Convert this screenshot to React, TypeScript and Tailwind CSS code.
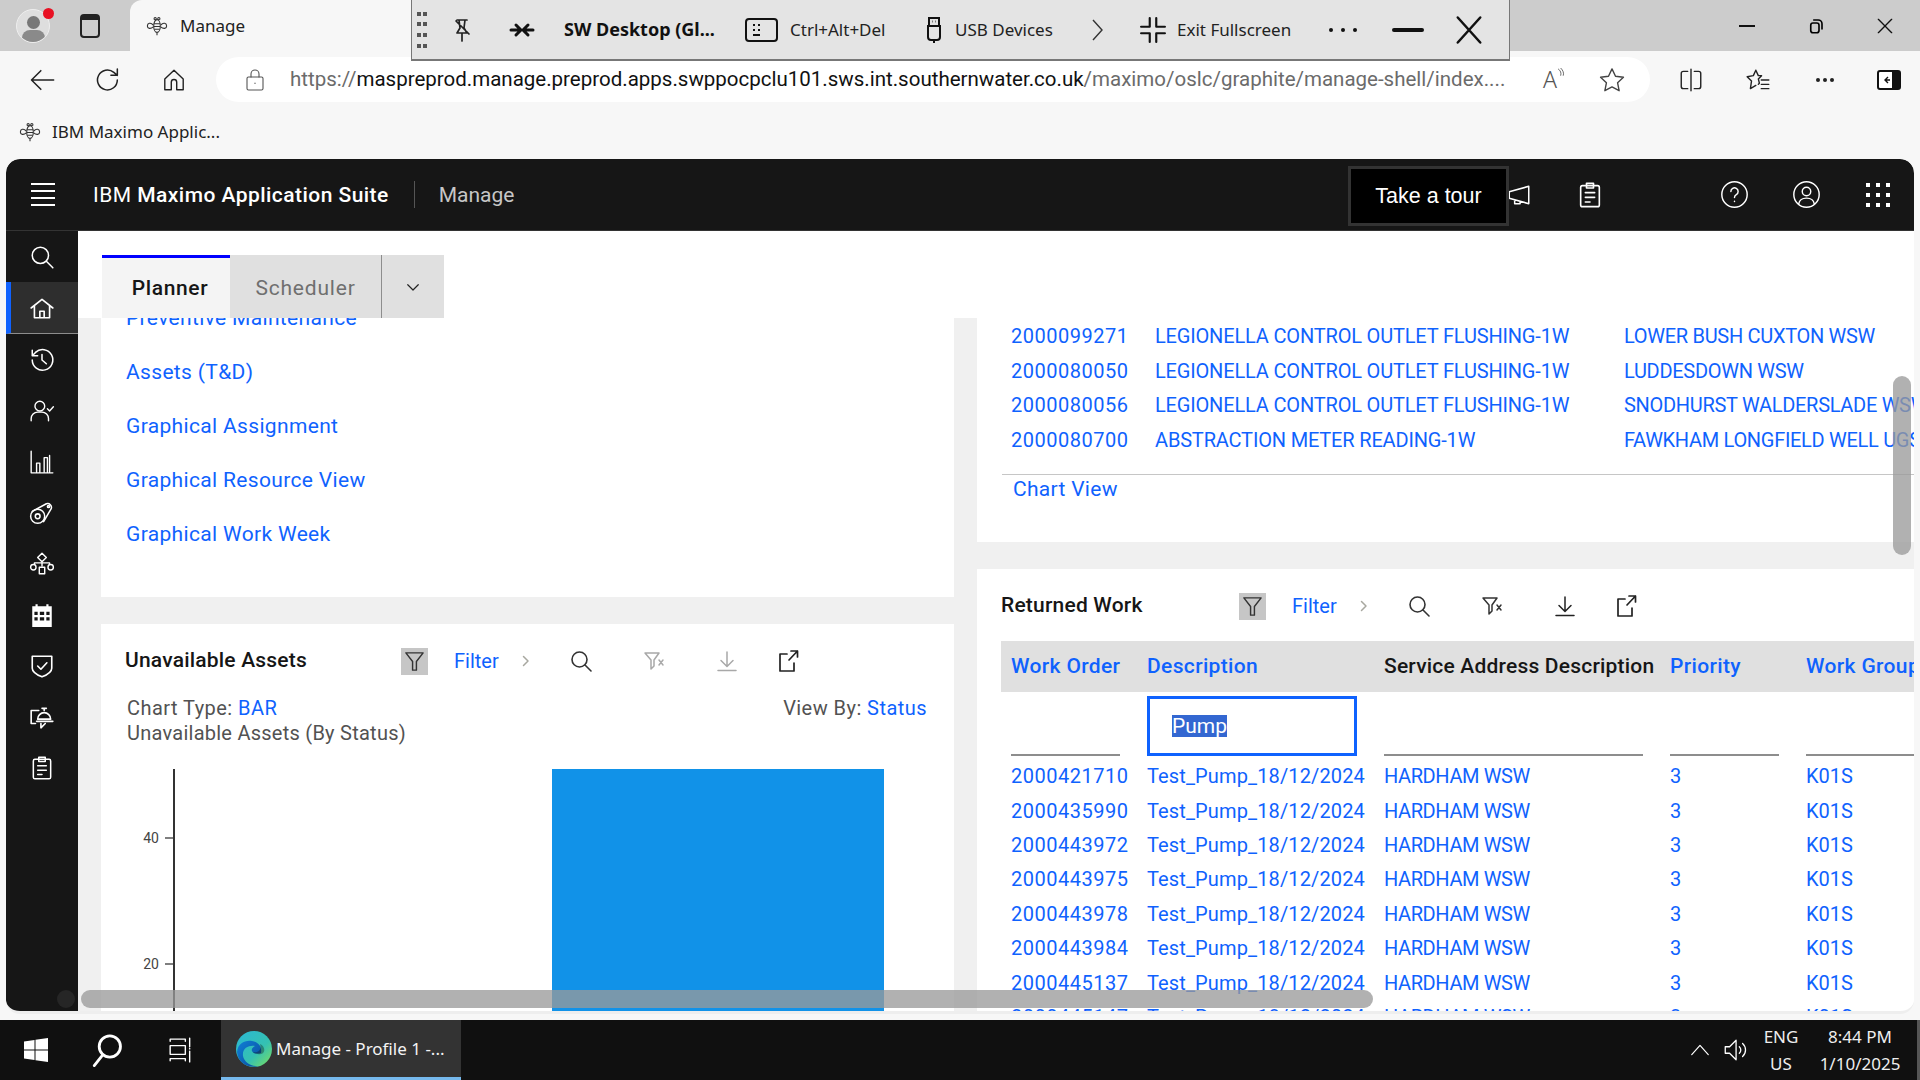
import type { ReactNode } from "react";

const plex = "font-['Roboto','Liberation_Sans',sans-serif]";
const ui = "font-['Noto_Sans','Liberation_Sans',sans-serif]";

function Ic({ className, sw = 1.5, children }: { className?: string; sw?: number; children: ReactNode }) {
  return (
    <svg viewBox="0 0 24 24" fill="none" stroke="currentColor" strokeWidth={sw} strokeLinecap="round" strokeLinejoin="round" className={className}>
      {children}
    </svg>
  );
}

function Bee({ className }: { className?: string }) {
  return (
    <svg viewBox="0 0 24 24" fill="none" stroke="currentColor" strokeWidth="1.2" className={className}>
      <circle cx="10" cy="4" r="1.2" />
      <circle cx="14" cy="4" r="1.2" />
      <ellipse cx="12" cy="12" rx="3.6" ry="7" />
      <path d="M8.5 9.5h7M8.5 12.5h7M9 15.5h6M12 19v3" />
      <path d="M8 11C5 7.5 1.5 9 1.5 12s3.5 3.5 6.5 1M16 11c3-3.5 6.5-2 6.5 1s-3.5 3.5-6.5 1" />
    </svg>
  );
}

function Funnel({ className, x = false }: { className?: string; x?: boolean }) {
  return (
    <Ic className={className} sw={1.5}>
      <path d={x ? "M3 4h14l-5 7v6l-3 3v-9z" : "M3 3h18l-7 9v9h-4v-9z"} />
      {x && <path d="M17 11l4 5M21 11l-4 5" />}
    </Ic>
  );
}

function CardToolbar({ title, titleClass, clearClass, downloadClass }: { title: string; titleClass: string; clearClass: string; downloadClass: string }) {
  return (
    <div className="flex items-center shrink-0">
      <div className={`pl-[24px] text-[21px] font-medium text-[#161616] tracking-[0.2px] whitespace-nowrap ${titleClass}`}>{title}</div>
      <div className="w-[27px] h-[27px] bg-[#c6c6c6] flex items-center justify-center text-[#333]">
        <Funnel className="w-[23px] h-[23px]" />
      </div>
      <a className="ml-[26px] w-[46px] text-[20px] text-[#0f62fe] whitespace-nowrap">Filter</a>
      <div className="ml-[20px] w-[12px] text-[#a8a8a0]">
        <Ic className="w-[12px] h-[16px]" sw={3}><path d="M7 3l9 9-9 9" /></Ic>
      </div>
      <Ic className="ml-[37px] w-[24px] h-[24px] text-[#333]" sw={1.6}><circle cx="10.5" cy="10.5" r="7.5" /><path d="M16 16l6 6" /></Ic>
      <Funnel x className={`ml-[49px] w-[24px] h-[24px] ${clearClass}`} />
      <Ic className={`ml-[49px] w-[24px] h-[24px] ${downloadClass}`}><path d="M12 3v14M6 11.5l6 6 6-6M3 21.5h18" /></Ic>
      <Ic className="ml-[37px] w-[24px] h-[24px] text-[#222]" sw={1.7}><path d="M11 5H4v17h14v-8M13 11l8.5-9M15 2h6.5v6" /></Ic>
    </div>
  );
}

const topRows = [
  ["2000099271", "LEGIONELLA CONTROL OUTLET FLUSHING-1W", "LOWER BUSH CUXTON WSW"],
  ["2000080050", "LEGIONELLA CONTROL OUTLET FLUSHING-1W", "LUDDESDOWN WSW"],
  ["2000080056", "LEGIONELLA CONTROL OUTLET FLUSHING-1W", "SNODHURST WALDERSLADE WSW"],
  ["2000080700", "ABSTRACTION METER READING-1W", "FAWKHAM LONGFIELD WELL UGS"],
];

const returned = ["2000421710", "2000435990", "2000443972", "2000443975", "2000443978", "2000443984", "2000445137", "2000445147"];

const links = ["Preventive Maintenance", "Assets (T&D)", "Graphical Assignment", "Graphical Resource View", "Graphical Work Week"];

function TitleBar() {
  return (
    <div className={`h-[51px] shrink-0 bg-[#cccccc] flex items-center ${ui}`}>
      <div className="ml-[16px] w-[34px] h-[34px] rounded-full bg-[#dedede] border border-[#eee] relative overflow-hidden">
        <div className="absolute left-[10px] top-[6px] w-[13px] h-[13px] rounded-full bg-[#777]" />
        <div className="absolute left-[5px] top-[20px] w-[23px] h-[16px] rounded-full bg-[#8a8a8a]" />
      </div>
      <div className="ml-[-7px] mt-[-24px] w-[11px] h-[11px] rounded-full bg-[#e81123] z-10" />
      <div className="ml-[26px] w-[20px] h-[24px] rounded-[4px] border-2 border-t-[6px] border-[#222]" />
      <div className="ml-[30px] w-[290px] h-[51px] bg-[#f7f7f7] rounded-tl-[12px] flex items-center pl-[16px]">
        <Bee className="w-[22px] h-[22px] text-[#333]" />
        <span className="ml-[12px] text-[17px] text-[#222]">Manage</span>
      </div>
      <div className="ml-auto flex items-center">
        <div className="w-[69px] flex justify-center"><div className="w-[16px] h-[2px] bg-[#111]" /></div>
        <div className="w-[69px] flex justify-center">
          <Ic className="w-[18px] h-[18px] text-[#000]" sw={2.2}><rect x="5" y="8" width="11" height="13" rx="3" /><path d="M9 4h6a5 5 0 0 1 5 5v7" /></Ic>
        </div>
        <div className="w-[69px] mr-[1px] flex justify-center">
          <Ic className="w-[20px] h-[20px] text-[#111]" sw={1.6}><path d="M4 4l16 16M20 4L4 20" /></Ic>
        </div>
      </div>
    </div>
  );
}

function RemoteBar() {
  return (
    <div className={`absolute left-[411px] top-0 w-[1099px] h-[61px] bg-[#e4e4e4] border-x border-b-2 border-[#777] flex items-center text-[#222] whitespace-nowrap ${ui}`}>
      <svg viewBox="0 0 10 36" className="ml-[5px] w-[10px] h-[36px] text-[#555]" fill="currentColor">
        <rect x="0" y="0" width="4" height="4" /><rect x="6" y="0" width="4" height="4" />
        <rect x="0" y="10" width="4" height="4" /><rect x="6" y="10" width="4" height="4" />
        <rect x="0" y="21" width="4" height="4" /><rect x="6" y="21" width="4" height="4" />
        <rect x="0" y="32" width="4" height="4" /><rect x="6" y="32" width="4" height="4" />
      </svg>
      <Ic className="ml-[23px] w-[24px] h-[26px] text-[#222]" sw={1.7}><path d="M7 2h10M9 2l1 8-3 5h10l-3-5 1-8M12 15v8M6 3l13 13" /></Ic>
      <Ic className="ml-[31px] w-[34px] h-[24px] text-[#111]" sw={3}><path d="M1 12h8M6 7l5 5-5 5M23 12h-8M18 7l-5 5 5 5" /></Ic>
      <span className="ml-[25px] w-[150px] text-[18px] font-bold text-[#111]">SW Desktop (Gl...</span>
      <svg viewBox="0 0 33 24" className="ml-[31px] w-[33px] h-[24px] text-[#111]" fill="none" stroke="currentColor" strokeWidth="2">
        <rect x="1" y="1" width="31" height="22" rx="3" />
        <path d="M8 7h2M13 7h2M8 12h2M13 12h2M8 17h7" />
      </svg>
      <span className="ml-[12px] w-[100px] text-[17px]">Ctrl+Alt+Del</span>
      <svg viewBox="0 0 16 26" className="ml-[36px] w-[16px] h-[26px] text-[#111]" fill="none" stroke="currentColor" strokeWidth="2">
        <path d="M3 1h10v8H3zM2 9h12v11a3 3 0 0 1-3 3H5a3 3 0 0 1-3-3zM8 23v3M6 4.500h.5M9.500 4.500h.5" />
      </svg>
      <span className="ml-[13px] w-[97px] text-[17px]">USB Devices</span>
      <svg viewBox="0 0 12 24" className="ml-[39px] w-[12px] h-[24px] text-[#333]" fill="none" stroke="currentColor" strokeWidth="1.4">
        <path d="M2 2l9 10-9 10" />
      </svg>
      <Ic className="ml-[37px] w-[26px] h-[26px] text-[#111]" sw={2}><path d="M9 1v8H1M15 1v8h8M9 23v-8H1M15 23v-8h8" /></Ic>
      <span className="ml-[11px] w-[113px] text-[17px]">Exit Fullscreen</span>
      <div className="ml-[38px] w-[30px] flex justify-between px-[1px]">
        <div className="w-[4px] h-[4px] rounded-full bg-[#111]" />
        <div className="w-[4px] h-[4px] rounded-full bg-[#111]" />
        <div className="w-[4px] h-[4px] rounded-full bg-[#111]" />
      </div>
      <div className="ml-[34px] w-[32px] h-[4px] rounded-full bg-[#111]" />
      <Ic className="ml-[30px] w-[30px] h-[30px] text-[#111]" sw={2}><path d="M3 2l18 20M21 2L3 22" /></Ic>
    </div>
  );
}

function AddressRow() {
  return (
    <div className={`h-[61px] shrink-0 bg-[#f7f7f7] flex items-start pt-[6px] ${ui}`}>
      <div className="ml-[9px] w-[66px] h-[45px] flex items-center justify-center">
        <Ic className="w-[28px] h-[28px] text-[#222]" sw={1.3}><path d="M22 12H3M11 4l-8 8 8 8" /></Ic>
      </div>
      <div className="w-[66px] h-[45px] flex items-center justify-center">
        <Ic className="w-[28px] h-[28px] text-[#222]" sw={1.3}><path d="M20 12a8.5 8.5 0 1 1-3-6.5L20 8M20 2.5V8h-5.5" /></Ic>
      </div>
      <div className="w-[66px] h-[45px] flex items-center justify-center">
        <Ic className="w-[26px] h-[26px] text-[#222]" sw={1.3}><path d="M3.5 11 12 3l8.5 8v10h-6v-7a2.5 2.5 0 0 0-5 0v7h-6z" /></Ic>
      </div>
      <div className="ml-[9px] w-[1434px] h-[45px] shrink-0 rounded-full bg-white flex items-center">
        <Ic className="ml-[27px] w-[24px] h-[26px] text-[#555]" sw={1.1}><rect x="4" y="9" width="16" height="13" rx="1.5" /><path d="M8 9V6a4 4 0 0 1 8 0v3M12 15v.5" /></Ic>
        <div className="ml-[23px] w-[1220px] text-[20.5px] whitespace-nowrap overflow-hidden text-[#6b6b6b] font-['Roboto',sans-serif]">
          https://<span className="text-[#111]">maspreprod.manage.preprod.apps.swppocpclu101.sws.int.southernwater.co.uk</span>/maximo/oslc/graphite/manage-shell/index....
        </div>
        <div className="ml-[33px] w-[26px] flex items-start text-[#555]">
          <span className="text-[23px] leading-none font-light">A</span>
          <svg viewBox="0 0 10 14" className="w-[9px] h-[12px]" fill="none" stroke="currentColor" strokeWidth="1">
            <path d="M1 1c3 2 4 5 3 8M4 0c3 3 4 6 3 9" />
          </svg>
        </div>
        <Ic className="ml-[29px] w-[28px] h-[28px] text-[#444]" sw={1.2}><path d="M12 2.5l3 6.3 6.8.9-5 4.7 1.3 6.8-6.1-3.3-6.1 3.3 1.3-6.8-5-4.7 6.8-.9z" /></Ic>
      </div>
      <div className="ml-[7px] flex">
        <div className="w-[67px] h-[45px] flex items-center justify-center">
          <Ic className="w-[26px] h-[26px] text-[#222]" sw={1.3}><path d="M9 4H5a2 2 0 0 0-2 2v12a2 2 0 0 0 2 2h4M15 4h4a2 2 0 0 1 2 2v12a2 2 0 0 1-2 2h-4M12 2v20" /></Ic>
        </div>
        <div className="w-[67px] h-[45px] flex items-center justify-center">
          <Ic className="w-[26px] h-[26px] text-[#222]" sw={1.3}><path d="M10 3l2.3 5h3l-3 3 1 4-1 1M10 3 7.7 8 2 9l4 4-1 7 5-3M15 12h7M15 16h7M15 20h7" /></Ic>
        </div>
        <div className="w-[67px] h-[45px] flex items-center justify-center gap-[3px]">
          <div className="w-[4px] h-[4px] rounded-full bg-[#222]" />
          <div className="w-[4px] h-[4px] rounded-full bg-[#222]" />
          <div className="w-[4px] h-[4px] rounded-full bg-[#222]" />
        </div>
        <div className="w-[61px] h-[45px] flex items-center justify-center">
          <svg viewBox="0 0 24 20" className="w-[24px] h-[20px]">
            <rect x="1" y="1" width="22" height="18" rx="2" fill="white" stroke="#111" strokeWidth="2" />
            <rect x="15" y="1" width="8" height="18" rx="1" fill="#111" />
            <path d="M11 7l-3 3 3 3M8 10h5" fill="none" stroke="#111" strokeWidth="1.4" />
          </svg>
        </div>
      </div>
    </div>
  );
}

function Header() {
  return (
    <div className={`h-[72px] shrink-0 bg-[#161616] border-b border-[#333] flex items-center text-white rounded-t-[14px] ${plex}`}>
      <div className="ml-[25px] w-[24px] flex flex-col gap-[5px]">
        <div className="h-[2px] bg-white" /><div className="h-[2px] bg-white" /><div className="h-[2px] bg-white" /><div className="h-[2px] bg-white" />
      </div>
      <div className="ml-[38px] pt-[2px] text-[21px] tracking-[0.46px] whitespace-nowrap">IBM <span className="font-medium">Maximo Application Suite</span></div>
      <div className="ml-[25px] w-px h-[27px] bg-[#555]" />
      <div className="ml-[24px] pt-[2px] text-[21px] text-[#c6c6c6]">Manage</div>
      <div className="ml-auto flex items-center">
        <Ic className="w-[26px] h-[26px] mr-[44px]" sw={1.4}><path d="M3 9v6l18 5V4zM8 16.500V20h5v-2" /></Ic>
        <Ic className="w-[28px] h-[30px] mr-[116px]" sw={1.4}><rect x="4" y="4" width="16" height="18" rx="1.500" /><rect x="9" y="2" width="6" height="4" /><path d="M8 10h8M8 14h8M8 18h4" /></Ic>
        <Ic className="w-[29px] h-[29px] mr-[43px]" sw={1.2}><circle cx="12" cy="12" r="10.500" /><path d="M9 9.500a3 3 0 1 1 4.500 2.600c-1 .6-1.500 1.200-1.500 2.400M12 17.500v.3" /></Ic>
        <Ic className="w-[29px] h-[29px] mr-[45px]" sw={1.2}><circle cx="12" cy="12" r="10.500" /><circle cx="12" cy="9.500" r="3.500" /><path d="M5.500 20c.5-3.500 3-5 6.500-5s6 1.500 6.500 5" /></Ic>
        <div className="mr-[24px] grid grid-cols-3 gap-[6px]">
          {Array.from({ length: 9 }).map((_, i) => (
            <div key={i} className="w-[4px] h-[4px] bg-white" />
          ))}
        </div>
      </div>
    </div>
  );
}

function Sidebar() {
  const cls = "w-[26px] h-[26px]";
  return (
    <div className="w-[72px] shrink-0 bg-[#161616] text-white flex flex-col rounded-bl-[10px]">
      <div className="h-[51px] flex items-center justify-center">
        <Ic className={cls} sw={1.4}><circle cx="10.5" cy="10.5" r="7.500" /><path d="M16 16l6 6" /></Ic>
      </div>
      <div className="h-[52px] flex items-center justify-center bg-[#2e2e2e] border-l-[5px] border-[#0f62fe] border-b border-b-[#8d8d8d] pr-[5px]">
        <Ic className={cls} sw={1.5}><path d="M2 12 12 4l10 8M5 10v11h14V10M10 21v-6h4v6" /></Ic>
      </div>
      <div className="h-[51px] flex items-center justify-center">
        <Ic className={cls} sw={1.4}><path d="M3 12a9.500 9.500 0 1 0 3-7L3 8M3 3v5h5M12 7v5l4 3.500" /></Ic>
      </div>
      <div className="h-[51px] flex items-center justify-center">
        <Ic className={cls} sw={1.3}><circle cx="10" cy="7.500" r="4.500" /><path d="M2 21v-2a6 6 0 0 1 6-6h4a6 6 0 0 1 6 6v2M17 10l2 2 3.500-4" /></Ic>
      </div>
      <div className="h-[51px] flex items-center justify-center">
        <Ic className={cls} sw={1.3}><path d="M2 2v20h20M7 21v-8h3v8M14 21V8h3v13M19 21V6" /></Ic>
      </div>
      <div className="h-[51px] flex items-center justify-center">
        <Ic className={cls} sw={1.4}><circle cx="8" cy="15" r="6.500" /><circle cx="8" cy="15" r="2.200" /><path d="M3 10.500 16 3.500a3.500 3.500 0 0 1 4.500 4.500L13.500 20" /><circle cx="18" cy="6" r="1" /></Ic>
      </div>
      <div className="h-[51px] flex items-center justify-center">
        <Ic className={cls} sw={1.3}><path d="M12 2l4 4-4 4-4-4zM5 12v-1h14v1M12 10v4" /><circle cx="4" cy="15" r="2.500" /><circle cx="20" cy="15" r="2.500" /><rect x="9.500" y="15" width="5" height="6" /></Ic>
      </div>
      <div className="h-[51px] flex items-center justify-center">
        <svg viewBox="0 0 24 24" className={cls} fill="white">
          <path fillRule="evenodd" d="M3 4h3V2h2v2h8V2h2v2h3v19H3zM5 9v3h3V9zm5 0v3h4V9zm6 0v3h3V9zM5 14v3h3v-3zm5 0v3h4v-3zm6 0v3h3v-3z" />
        </svg>
      </div>
      <div className="h-[51px] flex items-center justify-center">
        <Ic className={cls} sw={1.5}><path d="M3 3h18v11c0 3.500-4 6-9 8-5-2-9-4.500-9-8zM8 12l3 3 5.500-6" /></Ic>
      </div>
      <div className="h-[51px] flex items-center justify-center">
        <Ic className={cls} sw={1.5}><path d="M14 6V4M12 4h4M8 14a6 6 0 0 1 12 0zM7 16h15M9 6H2v12h4M11 18v4l4-4" /></Ic>
      </div>
      <div className="h-[51px] flex items-center justify-center">
        <Ic className={cls} sw={1.4}><rect x="4" y="4" width="16" height="18" rx="1.500" /><rect x="9" y="2" width="6" height="4" /><path d="M8 10h8M8 14h8M8 18h4" /></Ic>
      </div>
    </div>
  );
}

function Tabs() {
  return (
    <div className="h-[87px] shrink-0 bg-white flex items-end pl-[24px]">
      <div className="w-[128px] h-[63px] bg-[#f4f4f4] border-t-[3px] border-[#0000ff] pl-[8px] pt-[2px] flex items-center justify-center text-[21px] font-medium text-[#161616] tracking-[0.6px]">Planner</div>
      <div className="w-[152px] h-[63px] bg-[#e0e0e0] border-r border-[#8d8d8d] pt-[4px] flex items-center justify-center text-[21px] text-[#6f6f6f] tracking-[0.8px]">Scheduler</div>
      <div className="w-[62px] h-[63px] bg-[#e0e0e0] flex items-center justify-center text-[#222]">
        <Ic className="w-[18px] h-[18px]" sw={1.6}><path d="M5 9l7 7 7-7" /></Ic>
      </div>
    </div>
  );
}

function LeftColumn() {
  return (
    <div className="w-[853px] shrink-0 flex flex-col gap-[27px]">
      <div className="h-[279px] shrink-0 bg-white overflow-hidden">
        <div className="-mt-[26px]">
          {links.map((l) => (
            <div key={l} className="h-[54px] flex items-center pl-[25px] text-[21px] text-[#0f62fe] tracking-[0.34px]">{l}</div>
          ))}
        </div>
      </div>
      <div className="flex-1 min-h-0 bg-white overflow-hidden">
        <div className="mt-[1px] h-[72px] flex">
          <CardToolbar title="Unavailable Assets" titleClass="w-[300px]" clearClass="text-[#a8a8a8]" downloadClass="text-[#a8a8a8]" />
        </div>
        <div className="-mt-px text-[20px] leading-[25px] text-[#525252] pl-[26px] pr-[27px]">
          <div className="flex justify-between tracking-[0.45px]">
            <div>Chart Type: <span className="text-[#0f62fe]">BAR</span></div>
            <div>View By: <span className="text-[#0f62fe]">Status</span></div>
          </div>
          <div className="tracking-[0.25px] leading-[24px]">Unavailable Assets (By Status)</div>
        </div>
        <svg width="853" height="242" className="mt-[24px] block">
          <rect x="451" y="0" width="332" height="242" fill="#1192e8" />
          <line x1="73" y1="0" x2="73" y2="242" stroke="#333" strokeWidth="2" />
          <line x1="64" y1="69" x2="72" y2="69" stroke="#555" strokeWidth="1.500" />
          <line x1="64" y1="195" x2="72" y2="195" stroke="#555" strokeWidth="1.500" />
          <text x="58" y="74" textAnchor="end" fontSize="14" fill="#444">40</text>
          <text x="58" y="200" textAnchor="end" fontSize="14" fill="#444">20</text>
        </svg>
      </div>
    </div>
  );
}

function RightColumn() {
  return (
    <div className="flex-1 min-w-0 flex flex-col gap-[27px]">
      <div className="h-[224px] shrink-0 bg-white overflow-hidden pt-px">
        {topRows.map((r) => (
          <div key={r[0]} className="h-[34.6px] pl-[34px] grid grid-cols-[144px_469px_1fr] items-center text-[20px] text-[#0f62fe] whitespace-nowrap">
            <span className="tracking-[0.5px]">{r[0]}</span>
            <span className="tracking-[-0.17px]">{r[1]}</span>
            <span className="tracking-[-0.3px]">{r[2]}</span>
          </div>
        ))}
        <div className="mt-[17px] ml-[25px] border-t border-[#c6c6c6] pl-[11px] text-[21px] tracking-[0.3px] leading-[28px] text-[#0f62fe]">Chart View</div>
      </div>
      <div className="flex-1 min-h-0 bg-white overflow-hidden">
        <div className="h-[72px] pt-[2px] flex">
          <CardToolbar title="Returned Work" titleClass="w-[262px]" clearClass="text-[#333]" downloadClass="text-[#222]" />
        </div>
        <div className="ml-[24px]">
          <div className="h-[51px] bg-[#e0e0e0] pl-[10px] grid grid-cols-[136px_237px_286px_136px_1fr] items-center text-[21px] tracking-[0.35px] font-medium text-[#0f62fe] whitespace-nowrap overflow-hidden">
            <span>Work Order</span>
            <span>Description</span>
            <span className="text-[#161616] tracking-[0.2px]">Service Address Description</span>
            <span>Priority</span>
            <span>Work Group</span>
          </div>
          <div className="h-[64px] pl-[10px] grid grid-cols-[136px_237px_286px_136px_1fr] items-end">
            <div className="w-[109px] border-b-2 border-[#8d8d8d]" />
            <div className="h-[60px] w-[210px] border-[3px] border-[#0f62fe] flex items-center pl-[22px] text-[21px]">
              <span className="bg-[#3367d1] text-white leading-[22px]">Pump</span>
            </div>
            <div className="w-[259px] border-b-2 border-[#8d8d8d]" />
            <div className="w-[109px] border-b-2 border-[#8d8d8d]" />
            <div className="border-b-2 border-[#8d8d8d]" />
          </div>
          <div className="mt-[3px]">
            {returned.map((id) => (
              <div key={id} className="h-[34.4px] pl-[10px] grid grid-cols-[136px_237px_286px_136px_1fr] items-center text-[20px] text-[#0f62fe] whitespace-nowrap">
                <span className="tracking-[0.5px]">{id}</span>
                <span className="tracking-[0.13px]">Test_Pump_18/12/2024</span>
                <span className="tracking-[-0.4px]">HARDHAM WSW</span>
                <span>3</span>
                <span>K01S</span>
              </div>
            ))}
          </div>
        </div>
      </div>
    </div>
  );
}

function EdgeLogo() {
  return (
    <svg viewBox="0 0 36 36" className="w-[36px] h-[36px]">
      <defs>
        <linearGradient id="edgeA" x1="0" y1="0" x2="1" y2="1">
          <stop offset="0" stopColor="#2ab7d6" />
          <stop offset="0.6" stopColor="#35c1b1" />
          <stop offset="1" stopColor="#7fe05a" />
        </linearGradient>
        <linearGradient id="edgeB" x1="0" y1="0" x2="1" y2="1">
          <stop offset="0" stopColor="#0f7fd6" />
          <stop offset="1" stopColor="#0b4c9c" />
        </linearGradient>
      </defs>
      <circle cx="18" cy="18" r="18" fill="url(#edgeA)" />
      <path d="M1 21C2 12 9 9 16 10c7 1 10 6 9 12-3 1-8 1-9-2-1-2 1-4 3-5-6-1-13 2-12 10 1 6 8 11 17 10C12 38 2 32 1 21z" fill="url(#edgeB)" />
      <path d="M24 13c5 2 6 9 1 10-3 .5-7 0-8-2 4 1 9-1 7-8z" fill="#111" opacity="0.35" />
    </svg>
  );
}

function Taskbar() {
  return (
    <div className={`h-[60px] shrink-0 bg-[#101010] flex items-center text-white whitespace-nowrap border-r-[3px] border-[#555] ${ui}`}>
      <svg viewBox="0 0 24 24" className="ml-[24px] w-[24px] h-[24px]" fill="white">
        <path d="M0 3.500 10.500 2v9.500H0zM11.500 1.800 24 0v11.500H11.500zM0 12.500h10.500V22L0 20.500zM11.500 12.500H24V24l-12.500-1.800z" />
      </svg>
      <Ic className="ml-[42px] w-[34px] h-[36px]" sw={2}><circle cx="14" cy="9.500" r="7.500" /><path d="M9 15.500 3 23" /></Ic>
      <Ic className="ml-[44px] w-[26px] h-[30px]" sw={1.3}><path d="M2 2h14M2 2v2M16 2v2M2 8h14v8H2zM2 22v-2h14v2M20 1v8M20 13v10M20 10.500v.5" /></Ic>
      <div className="ml-[27px] w-[240px] h-full bg-[#333333] border-b-[3px] border-[#76b9ed] flex items-center pl-[15px]">
        <EdgeLogo />
        <span className="ml-[4px] text-[17px] text-[#f4f4f4]">Manage - Profile 1 -...</span>
      </div>
      <div className="ml-auto flex items-center">
        <Ic className="w-[22px] h-[22px]" sw={1.3}><path d="M3 17 12 7l9 10" /></Ic>
        <Ic className="ml-[11px] w-[26px] h-[28px]" sw={1.2}><path d="M3 9v6h4l6 6V3L7 9zM16 9a4 4 0 0 1 0 6M19 6a8 8 0 0 1 0 12" /></Ic>
        <div className="ml-[15px] w-[36px] flex flex-col items-center text-[17px] leading-[27px] text-[#eee]">
          <span>ENG</span>
          <span>US</span>
        </div>
        <div className="ml-[19px] mr-[15px] w-[84px] flex flex-col items-center text-[17px] leading-[27px] text-[#eee]">
          <span>8:44 PM</span>
          <span>1/10/2025</span>
        </div>
      </div>
    </div>
  );
}

export default function App() {
  return (
    <div className="relative w-[1920px] h-[1080px] overflow-hidden bg-[#f7f7f7] flex flex-col">
      <TitleBar />
      <AddressRow />
      <div className={`h-[47px] shrink-0 flex items-center pl-[19px] pb-[8px] text-[17px] text-[#222] ${ui}`}>
        <Bee className="w-[22px] h-[22px] text-[#333]" />
        <span className="ml-[11px]">IBM Maximo Applic...</span>
      </div>
      <div className={`mx-[6px] h-[855px] shrink-0 bg-[#f0f0f0] rounded-[14px] border-b-[3px] border-[#eeeeee] overflow-hidden flex flex-col ${plex}`}>
        <Header />
        <div className="flex-1 min-h-0 flex">
          <Sidebar />
          <div className="flex-1 min-w-0 flex flex-col">
            <Tabs />
            <div className="flex-1 min-h-0 bg-[#f0f0f0] flex gap-[23px] pl-[23px]">
              <LeftColumn />
              <RightColumn />
            </div>
          </div>
        </div>
      </div>
      <div className="h-[6px] shrink-0" />
      <Taskbar />

      {/* overlays */}
      <RemoteBar />
      <div className="absolute left-[1348px] top-[166px] w-[161px] h-[60px] bg-black border-[3px] border-[#333] flex items-center justify-center text-[21.5px] text-white font-['Liberation_Sans',sans-serif]">Take a tour</div>
      <div className="absolute left-[81px] top-[990px] w-[1292px] h-[18px] rounded-full bg-[rgba(153,153,153,0.77)]" />
      <div className="absolute left-[57px] top-[990px] w-[18px] h-[18px] rounded-full bg-[#262626]" />
      <div className="absolute left-[1893px] top-[376px] w-[18px] h-[179px] rounded-full bg-[rgba(153,153,153,0.77)]" />
    </div>
  );
}
